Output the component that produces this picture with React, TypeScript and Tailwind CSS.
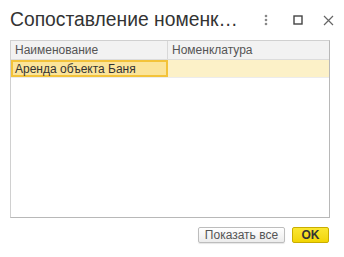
export default function App() {
  return (
    <div
      className="w-[344px] h-[257px] bg-white flex flex-col relative overflow-hidden"
      style={{ fontFamily: "Arial, 'Liberation Sans', sans-serif" }}
    >
      {/* Title bar */}
      <div className="h-[40px] flex items-center pl-[10px] pr-[10px]">
        <div className="text-[19.3px] text-[#333] leading-none whitespace-nowrap">
          Сопоставление номенк…
        </div>
        <div className="ml-auto flex items-center">
          <svg width="4" height="12" viewBox="0 0 4 12" className="mr-[25px]">
            <circle cx="2" cy="2" r="1.3" fill="#888" />
            <circle cx="2" cy="6" r="1.3" fill="#888" />
            <circle cx="2" cy="10" r="1.3" fill="#888" />
          </svg>
          <svg width="10" height="10" viewBox="0 0 10 10" className="mr-[20px]">
            <rect x="1" y="1" width="8" height="8" fill="none" stroke="#444" strokeWidth="1.4" />
          </svg>
          <svg width="11" height="11" viewBox="0 0 11 11">
            <path d="M1 1L10 10M10 1L1 10" stroke="#666" strokeWidth="1.2" />
          </svg>
        </div>
      </div>

      {/* Table */}
      <div className="mx-[10px] w-[320px] h-[178px] border border-[#b8b8b8] border-t-[#d0d0d0] border-l-[#d0d0d0] flex flex-col text-[12px]">
        <div className="flex h-[19px] bg-[#f2f2f2] border-b border-[#dcdcdc] text-[#555]">
          <div className="w-[157px] border-r border-[#d8d8d8] pl-[4px] flex items-center">Наименование</div>
          <div className="flex-1 pl-[4px] flex items-center">Номенклатура</div>
        </div>
        <div className="flex h-[18px] bg-[#fcf1c8] border-b border-[#ececec] text-[#333]">
          <div className="w-[157px] bg-[#fbe49a] border-2 border-[#f3c33a] pl-[2px] flex items-center">
            Аренда объекта Баня
          </div>
          <div className="flex-1" />
        </div>
        <div className="flex-1" />
      </div>

      {/* Buttons */}
      <div className="flex justify-end items-center mt-[9px] pr-[15px] gap-[7px]">
        <button className="h-[16px] w-[87px] rounded-[2px] border border-[#bdbdbd] bg-gradient-to-b from-white to-[#ececec] text-[12px] text-[#555] leading-none shadow-[0_1px_1px_rgba(0,0,0,0.1)]">
          Показать все
        </button>
        <button className="h-[16px] w-[37px] rounded-[2px] border border-[#c9ad00] bg-gradient-to-b from-[#fbe730] to-[#f2d500] text-[12px] font-bold text-[#333] leading-none">
          OK
        </button>
      </div>
    </div>
  );
}
